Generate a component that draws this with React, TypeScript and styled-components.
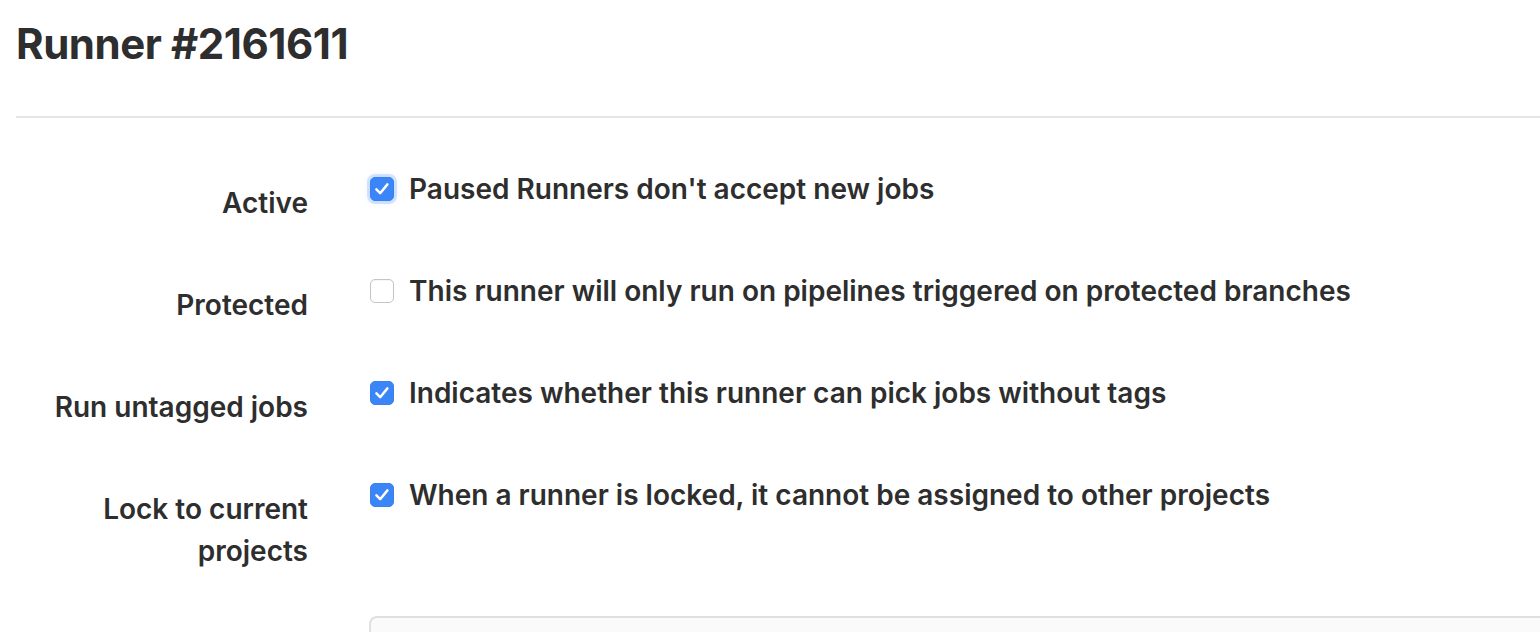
import React from "react";
import styled, { createGlobalStyle, css } from "styled-components";

const Global = createGlobalStyle`
  html, body { margin: 0; padding: 0; background: #fff; overflow: hidden; }
  body { font-family: Inter, "Noto Sans", sans-serif; color: #2e2e2e; }
`;

const Page = styled.div`
  padding-left: 16px;
  width: 1524px;
  height: 632px;
  overflow: hidden;
`;

const Title = styled.h3`
  margin: 19px 0 0;
  font-size: 42px;
  line-height: 50px;
  font-weight: 650;
  letter-spacing: -0.45px;
  color: #2e2e2e;
`;

const Divider = styled.hr`
  margin: 47px 0 50px;
  border: 0;
  height: 2px;
  background: #e5e5e5;
`;

const Form = styled.div`
  display: flex;
  flex-direction: column;
  gap: 46px;
`;

const Row = styled.div`
  display: grid;
  grid-template-columns: 292px 1fr;
  column-gap: 62px;
  align-items: start;
`;

const Label = styled.label`
  padding-top: 14px;
  text-align: right;
  font-size: 28px;
  line-height: 42px;
  font-weight: 600;
  color: #2e2e2e;
`;

const Control = styled.div`
  display: flex;
  align-items: flex-start;
  gap: 15px;
`;

const Box = styled.span<{ $checked: boolean; $focused?: boolean }>`
  flex: none;
  margin-top: 9px;
  width: 24px;
  height: 24px;
  box-sizing: border-box;
  border-radius: 5px;
  display: flex;
  align-items: center;
  justify-content: center;
  ${(p) =>
    p.$checked
      ? css`
          background: #3a85f7;
          border: 1px solid #3a80ee;
        `
      : css`
          background: #fff;
          border: 1px solid #c4c4c4;
          box-shadow: inset 0 1px 1px rgba(0, 0, 0, 0.04);
        `}
  ${(p) =>
    p.$focused &&
    css`
      box-shadow: 0 0 0 3px rgba(58, 133, 247, 0.18), 0 0 7px rgba(58, 133, 247, 0.25);
    `}
`;

const Text = styled.span`
  font-size: 28px;
  line-height: 42px;
  font-weight: 600;
  color: #2e2e2e;
`;

const Panel = styled.div`
  margin: 44px -20px 0 353px;
  height: 80px;
  background: #fafafa;
  border: 2px solid #e0e0e0;
  border-right: 0;
  border-radius: 8px 0 0 0;
`;

const Check = () => (
  <svg width="16" height="16" viewBox="0 0 16 16" fill="none">
    <path d="M2.4 8.4 L6.2 12.2 L13.4 3.4" stroke="#fff" strokeWidth="2.5" strokeLinecap="round" strokeLinejoin="round" />
  </svg>
);

const rows = [
  { label: "Active", text: "Paused Runners don't accept new jobs", checked: true, focused: true },
  { label: "Protected", text: "This runner will only run on pipelines triggered on protected branches", checked: false },
  { label: "Run untagged jobs", text: "Indicates whether this runner can pick jobs without tags", checked: true },
  { label: "Lock to current projects", text: "When a runner is locked, it cannot be assigned to other projects", checked: true },
];

export default function App() {
  return (
    <>
      <Global />
      <Page>
        <Title>Runner #2161611</Title>
        <Divider />
        <Form>
          {rows.map((r) => (
            <Row key={r.label}>
              <Label>{r.label === "Lock to current projects" ? <>Lock to current<br />projects</> : r.label}</Label>
              <Control>
                <Box $checked={r.checked} $focused={r.focused}>{r.checked && <Check />}</Box>
                <Text>{r.text}</Text>
              </Control>
            </Row>
          ))}
        </Form>
        <Panel />
      </Page>
    </>
  );
}
